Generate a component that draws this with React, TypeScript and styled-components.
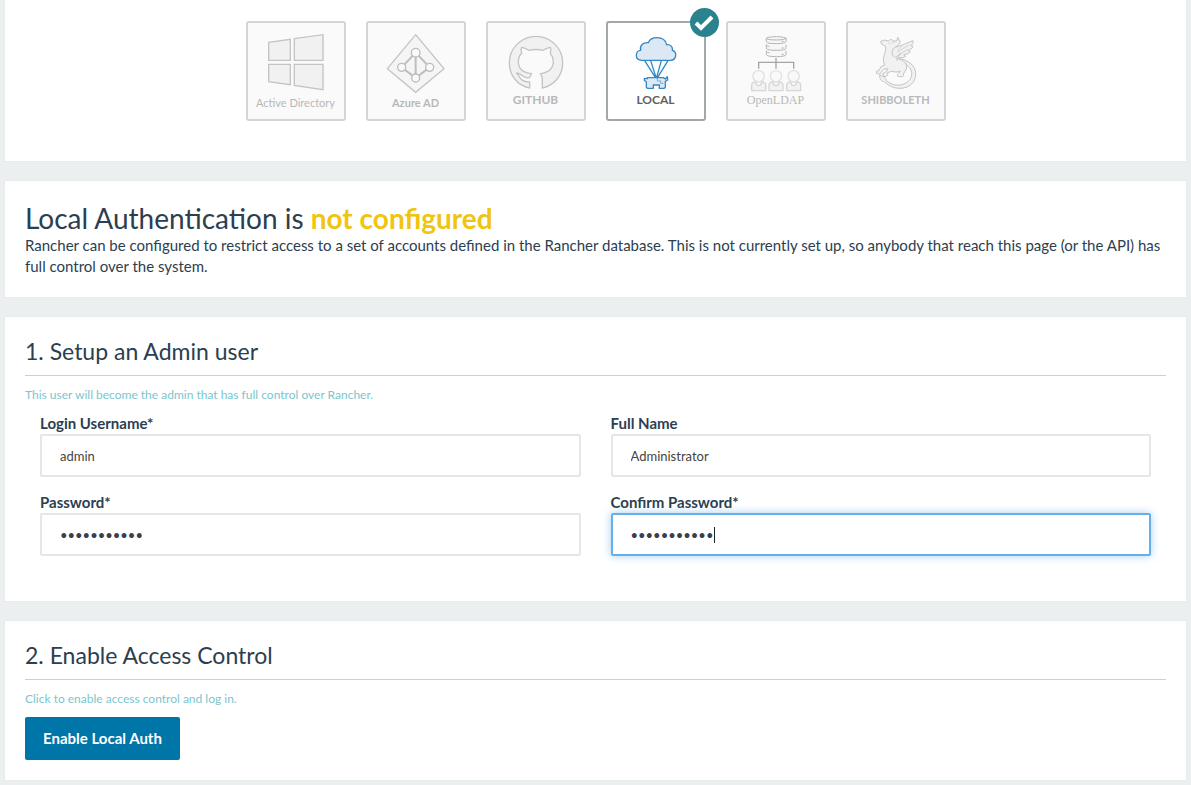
import React from "react";
import styled, { createGlobalStyle } from "styled-components";

const GlobalStyle = createGlobalStyle`
  * { box-sizing: border-box; }
  body {
    margin: 0;
    background: #ebeff0;
    color: #2c3e50;
    font-family: Lato, "Liberation Sans", sans-serif;
    font-size: 15px;
    line-height: 21px;
  }
`;

const Page = styled.main`
  display: flex;
  flex-direction: column;
  gap: 20px;
  padding: 0 5px 5px;
`;

const Panel = styled.section`
  padding: 20px;
  background: #fff;
  box-shadow: 0 0 1px #d8dedf;
`;

const ProviderPanel = styled(Panel)`
  display: flex;
  flex-wrap: wrap;
  justify-content: center;
  gap: 20px;
  padding: 21px 20px 40px;
`;

const Provider = styled.button<{ $active?: boolean }>`
  position: relative;
  display: flex;
  flex-direction: column;
  align-items: center;
  width: 100px;
  height: 100px;
  padding: 0;
  border: 2px solid ${(p) => (p.$active ? "#a0a8ab" : "#d5d5d5")};
  border-radius: 3px;
  background: ${(p) => (p.$active ? "#fff" : "#fafafa")};
  color: ${(p) => (p.$active ? "#5f5f5f" : "#b8b8b8")};
  cursor: pointer;
`;

const Logo = styled.svg<{ $tall?: boolean }>`
  flex: none;
  width: 96px;
  height: ${(p) => (p.$tall ? 72 : 69)}px;
  fill: none;
  stroke: #c4c4c4;
  stroke-width: 4;
  stroke-linejoin: round;
  stroke-linecap: round;
`;

type NameStyle = "bold" | "large" | "regular" | "serif";

const ProviderName = styled.span<{ $look: NameStyle }>`
  font-family: ${(p) => (p.$look === "serif" ? '"Liberation Serif", serif' : 'Lato, "Liberation Sans", sans-serif')};
  font-size: ${(p) => (p.$look === "serif" || p.$look === "large" ? 12 : 11)}px;
  font-weight: ${(p) => (p.$look === "serif" || p.$look === "regular" ? 400 : 700)};
  line-height: 16px;
  white-space: nowrap;
`;

const Badge = styled.span`
  position: absolute;
  top: -15px;
  right: -15px;
  display: grid;
  place-items: center;
  width: 29px;
  height: 29px;
  border-radius: 50%;
  background: #2a828e;
`;

const PageTitle = styled.h1`
  margin: 0;
  font-size: 28px;
  font-weight: 400;
  line-height: 34px;
`;

const Status = styled.b`
  color: #f1c40f;
`;

const Text = styled.p`
  margin: 0;
`;

const SectionTitle = styled.h2`
  margin: 0 0 8px;
  padding-bottom: 10px;
  border-bottom: 1px solid #cfcfcf;
  font-size: 23px;
  font-weight: 400;
  line-height: 28px;
`;

const Hint = styled.p`
  margin: 0 0 8px;
  color: #7cc5cd;
  font-size: 12px;
`;

const Fields = styled.form`
  display: grid;
  grid-template-columns: 1fr 1fr;
  gap: 15px 30px;
  padding: 0 15px 25px;
`;

const Field = styled.div`
  display: flex;
  flex-direction: column;
`;

const Label = styled.label`
  font-weight: 700;
`;

const InputBox = styled.div`
  position: relative;
  display: flex;
`;

const Input = styled.input`
  width: 100%;
  height: 43px;
  padding: 0 18px;
  border: 2px solid #e6e6e6;
  border-radius: 2px;
  outline: 0;
  background: #fff;
  color: #444;
  font-family: inherit;
  font-size: 13px;

  &[type="password"] {
    color: #3a3f4a;
    caret-color: transparent;
  }

  &:focus {
    border-color: #66afe9;
    box-shadow: 0 0 8px rgba(102, 175, 233, 0.6);
  }
`;

const Caret = styled.span`
  position: absolute;
  top: 14px;
  left: 103px;
  display: none;
  width: 1px;
  height: 16px;
  background: #222;

  input:focus + & {
    display: block;
  }
`;

const PrimaryButton = styled.button`
  height: 43px;
  padding: 0 18px 2px;
  border: 0;
  border-radius: 2px;
  background: #0075a8;
  color: #fff;
  font-family: inherit;
  font-size: 15px;
  font-weight: 700;
  cursor: pointer;
`;

const WindowsLogo = () => (
  <Logo $tall viewBox="24 39 288 216">
    <g fill="#f1f1f1" strokeLinejoin="miter">
      <path d="M86 97 151 88V151H86Z" />
      <path d="M163 86 249 74V151H163Z" />
      <path d="M86 163H151V224L86 215Z" />
      <path d="M163 163H249V239L163 226Z" />
    </g>
  </Logo>
);

const AzureLogo = () => (
  <Logo $tall viewBox="24 39 288 216">
    <path fill="#f5f5f5" strokeLinejoin="miter" d="M167 74 252 176 167 247 82 176Z" />
    <g stroke="#bdbdbd">
      <path strokeWidth="6" d="M167 128 125 172 167 204 209 172ZM167 128V204" />
      <g fill="#fafafa">
        <circle cx="167" cy="128" r="13" />
        <circle cx="125" cy="172" r="12" />
        <circle cx="209" cy="172" r="12" />
        <circle cx="167" cy="204" r="12" />
      </g>
    </g>
  </Logo>
);

const GithubLogo = () => (
  <Logo viewBox="24 39 288 207">
    <path
      fill="#f1f1f1"
      d="M149 234C111 226 88 195 88 159a80 80 0 0 1 160 0C248 195 224 226 187 234V207C187 199 185 195 181 191C205 188 220 177 220 154C220 144 217 137 211 130C214 123 213 117 211 112C204 112 196 117 189 121Q168 116 147 121C140 117 132 112 125 112C122 118 122 124 125 130C118 137 115 145 115 154C115 176 129 189 155 191C151 195 150 199 149 203C127 207 130 190 109 189C119 195 118 217 149 216Z"
    />
  </Logo>
);

const LocalLogo = () => (
  <Logo viewBox="24 69 288 207">
    <g fill="#dce9f4" stroke="#3288c6">
      <path d="M125 181C114 181 109 174 109 166C109 157 115 151 122 151C118 137 130 126 145 128C149 118 160 113 171 113C186 113 197 121 200 134C212 133 219 141 217 151C224 153 228 159 227 167C226 175 220 181 211 181Z" />
      <path fill="none" d="M134 182 166 232M152 182 168 232M184 182 170 232M204 182 173 232" />
      <path d="M142 233H190L196 237 202 230 203 240 196 244V262L193 265H178V255H160V265H142L139 261V246L133 241V236H142Z" />
      <path fill="none" strokeWidth="2" strokeDasharray="4 3" d="M172 235V243H182V250H192" />
    </g>
  </Logo>
);

const person = "M-9 16-17 19Q-21 21-21 27V43H21V27Q21 21 17 19L9 16Q8 28 0 28Q-8 28-9 16Z";

const LdapLogo = () => (
  <Logo viewBox="24 39 288 207">
    <g stroke="#b4b4b4" strokeWidth="3" fill="#f7f7f7">
      {[124, 105, 85].map((y) => (
        <g key={y}>
          <path d={`M139 ${y}V${y + 10}Q141 ${y + 16} 169 ${y + 16}Q197 ${y + 16} 198 ${y + 10}V${y}`} />
          {y === 85 ? <ellipse cx="169" cy={y} rx="30" ry="5" /> : <path d={`M139 ${y}Q141 ${y + 3} 147 ${y + 4}`} />}
          <path d={`M186 ${y + 9}h4`} />
        </g>
      ))}
    </g>
    <path stroke="#a5a5a5" strokeLinejoin="miter" strokeLinecap="butt" d="M168 144V176M116 176V157H221V176" />
    {[116, 168, 221].map((x) => (
      <g key={x} transform={`translate(${x} 199)`} stroke="#d6d6d6" fill="#f2f2f2">
        <path d={person} />
        <circle r="17" stroke="#e0e0e0" fill="#f9f9f9" />
      </g>
    ))}
  </Logo>
);

const ShibbolethLogo = () => (
  <Logo viewBox="24 39 288 207">
    <g fill="#f1f1f1" strokeWidth="3">
      <path d="M181 146C207 153 226 167 227 190C228 218 206 235 180 235C157 235 142 224 134 215C124 216 118 205 119 195C128 198 139 203 139 212C151 222 164 227 179 225C204 222 217 206 215 187C212 171 201 163 188 160Z" />
      <path d="M123 94 134 90 145 93 153 88 162 94 171 91 173 82 178 90 181 97C177 106 165 111 159 121C153 133 164 144 180 148C199 154 205 171 195 184L190 192C194 199 187 202 173 199C169 193 178 190 181 184C170 188 160 185 154 184L141 189C146 195 142 201 131 199L128 191 140 184 143 176 131 178 123 187C123 193 116 193 110 190L109 184 117 181 123 170 135 165C126 154 132 135 137 121L137 109 126 103Z" />
      <path d="M160 139C151 127 158 112 172 110L185 106 219 92C221 99 217 104 212 107L219 109C217 116 210 119 204 121L211 125C205 132 199 133 191 134L197 139C190 144 184 143 177 143L171 151C172 143 177 136 183 130L168 141" />
      <path fill="none" strokeWidth="2" d="M172 126 207 105M177 133 203 119M184 111 174 120M145 99 148 101M155 99 163 96" />
    </g>
  </Logo>
);

const CheckIcon = () => (
  <svg width="21" height="21" viewBox="0 0 21 21" aria-hidden="true">
    <path d="M2 11 7 16 18 5" fill="none" stroke="#fff" strokeWidth="4" />
  </svg>
);

const providers: { name: string; logo: React.ReactNode; look: NameStyle; active?: boolean }[] = [
  { name: "Active Directory", logo: <WindowsLogo />, look: "regular" },
  { name: "Azure AD", logo: <AzureLogo />, look: "bold" },
  { name: "GITHUB", logo: <GithubLogo />, look: "large" },
  { name: "LOCAL", logo: <LocalLogo />, look: "large", active: true },
  { name: "OpenLDAP", logo: <LdapLogo />, look: "serif" },
  { name: "SHIBBOLETH", logo: <ShibbolethLogo />, look: "bold" },
];

const fields = [
  { id: "username", label: "Login Username*", type: "text", value: "admin" },
  { id: "fullname", label: "Full Name", type: "text", value: "Administrator" },
  { id: "password", label: "Password*", type: "password", value: "rancheradmn" },
  { id: "confirm", label: "Confirm Password*", type: "password", value: "rancheradmn", focus: true },
];

export default function App() {
  return (
    <>
      <GlobalStyle />
      <Page>
        <ProviderPanel>
          {providers.map((p) => (
            <Provider key={p.name} type="button" $active={p.active} aria-pressed={!!p.active}>
              {p.logo}
              <ProviderName $look={p.look}>{p.name}</ProviderName>
              {p.active && (
                <Badge>
                  <CheckIcon />
                </Badge>
              )}
            </Provider>
          ))}
        </ProviderPanel>

        <Panel>
          <PageTitle>
            Local Authentication is <Status>not configured</Status>
          </PageTitle>
          <Text>
            Rancher can be configured to restrict access to a set of accounts defined in the Rancher database. This is
            not currently set up, so anybody that reach this page (or the API) has full control over the system.
          </Text>
        </Panel>

        <Panel>
          <SectionTitle>1. Setup an Admin user</SectionTitle>
          <Hint>This user will become the admin that has full control over Rancher.</Hint>
          <Fields>
            {fields.map((f) => (
              <Field key={f.id}>
                <Label htmlFor={f.id}>{f.label}</Label>
                <InputBox>
                  <Input id={f.id} type={f.type} defaultValue={f.value} autoFocus={f.focus} autoComplete="off" />
                  {f.focus && <Caret />}
                </InputBox>
              </Field>
            ))}
          </Fields>
        </Panel>

        <Panel>
          <SectionTitle>2. Enable Access Control</SectionTitle>
          <Hint>Click to enable access control and log in.</Hint>
          <PrimaryButton type="button">Enable Local Auth</PrimaryButton>
        </Panel>
      </Page>
    </>
  );
}
